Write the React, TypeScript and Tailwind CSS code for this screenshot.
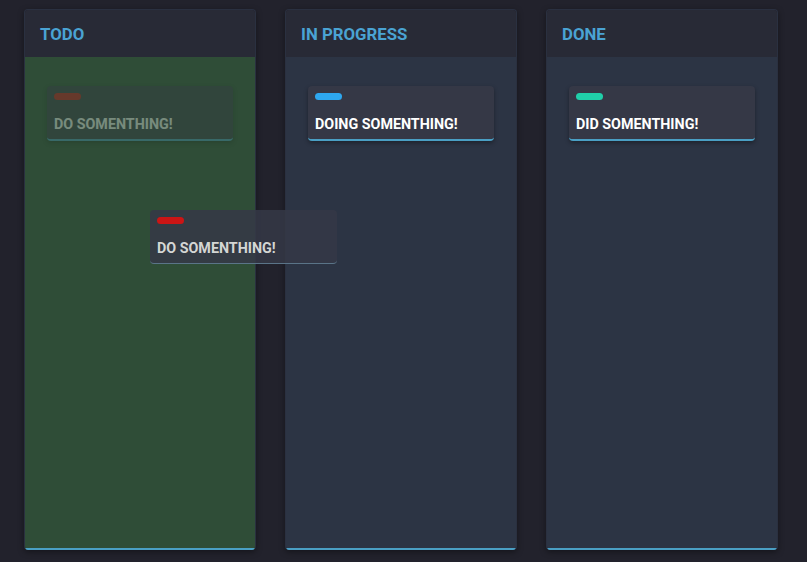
const columns = [
  {
    title: "TODO",
    body: "bg-[#2f4d37]",
    cards: [{ label: "DO SOMENTHING!", tag: "bg-[#cc1515]", placeholder: true }],
  },
  {
    title: "IN PROGRESS",
    body: "bg-[#2c3444]",
    cards: [{ label: "DOING SOMENTHING!", tag: "bg-[#2ea8f0]", placeholder: false }],
  },
  {
    title: "DONE",
    body: "bg-[#2c3444]",
    cards: [{ label: "DID SOMENTHING!", tag: "bg-[#20cfa9]", placeholder: false }],
  },
];

function Card({ label, tag, faded }: { label: string; tag: string; faded?: boolean }) {
  return (
    <div
      className={`rounded-[4px] bg-[#353846] p-[7px] border-b-2 border-[#4a9fc4] shadow-[0_2px_4px_rgba(0,0,0,0.35)] ${
        faded ? "opacity-35" : ""
      }`}
    >
      <div className={`h-[7px] w-[27px] rounded-full ${tag}`} />
      <p className="mt-[16px] text-[14.3px] leading-[16px] font-bold text-white">{label}</p>
    </div>
  );
}

export default function App() {
  return (
    <div className="relative h-[562px] w-[807px] overflow-hidden bg-[#22222c] font-['Roboto',sans-serif]">
      {/* Board */}
      <div className="flex gap-[29px] pl-[24px] pt-[9px]">
        {columns.map((col) => (
          <div
            key={col.title}
            className="flex h-[541px] w-[232px] flex-col overflow-hidden rounded-[4px] border border-[#2a3040] border-b-0 shadow-[0_2px_6px_rgba(0,0,0,0.4)]"
          >
            {/* Header */}
            <div className="flex h-[47px] shrink-0 items-center bg-[#282a36] px-[15px] pt-[2px]">
              <h2 className="text-[16.8px] font-bold text-[#4aa3d3]">{col.title}</h2>
            </div>
            {/* Body */}
            <div className={`flex-1 px-[22px] pt-[29px] ${col.body} border-b-2 border-[#4a9fc4]`}>
              {col.cards.map((c) => (
                <Card key={c.label} label={c.label} tag={c.tag} faded={c.placeholder} />
              ))}
            </div>
          </div>
        ))}
      </div>

      {/* Dragged card */}
      <div className="absolute left-[150px] top-[210px] w-[187px] rounded-[4px] bg-[#353846]/85 p-[7px] border-b border-[#5a7488]">
        <div className="h-[7px] w-[27px] rounded-full bg-[#cc1515]" />
        <p className="mt-[16px] text-[14.3px] leading-[16px] font-bold text-[#d4d6d4]">DO SOMENTHING!</p>
      </div>
    </div>
  );
}
